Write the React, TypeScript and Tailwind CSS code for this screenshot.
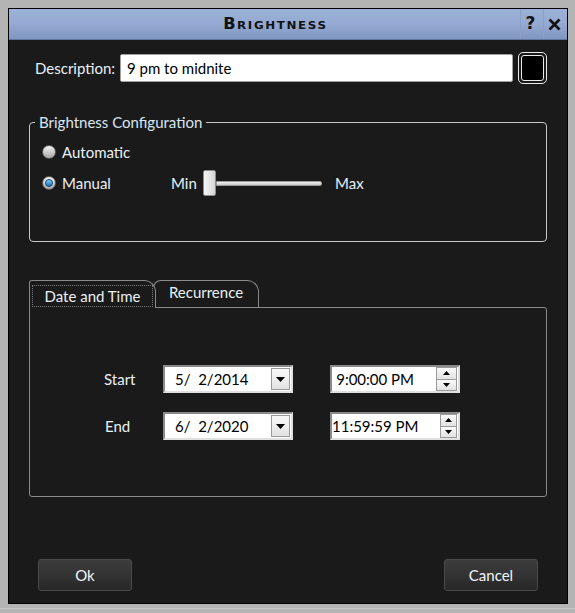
import React from 'react';

const font = { fontFamily: 'Lato, "Noto Sans", sans-serif' };

function Radio({ checked }: { checked?: boolean }) {
  return (
    <span className="relative flex h-[14px] w-[14px] items-center justify-center rounded-full border border-[#5a5a5a] bg-gradient-to-b from-[#f4f4f4] to-[#a8a8a8]">
      {checked && (
        <span className="h-[8px] w-[8px] rounded-full border border-[#0b4a78] bg-gradient-to-b from-[#7fd3ff] to-[#1470b8]" />
      )}
    </span>
  );
}

function DateBox({ value }: { value: string }) {
  return (
    <div className="flex h-[28px] w-[130px] items-center border-2 border-t-[#8a8a8a] border-l-[#8a8a8a] border-b-[#e0e0e0] border-r-[#e0e0e0] bg-white">
      <span className="flex-1 pl-[10px] text-[15px] text-black whitespace-pre">{value}</span>
      <div className="mr-[1px] flex h-[22px] w-[19px] items-center justify-center border border-[#9a9a9a] bg-gradient-to-b from-[#fafafa] to-[#e2e2e2]">
        <svg width="9" height="5" viewBox="0 0 9 5">
          <path d="M0 0 L9 0 L4.5 5 Z" fill="#000" />
        </svg>
      </div>
    </div>
  );
}

function TimeBox({ value }: { value: string }) {
  return (
    <div className="flex h-[28px] w-[130px] items-center border-2 border-t-[#8a8a8a] border-l-[#8a8a8a] border-b-[#e0e0e0] border-r-[#e0e0e0] bg-white">
      <span className="flex-1 whitespace-nowrap pr-[22px] text-right text-[15px] text-black">{value}</span>
      <div className="mr-[1px] flex h-[24px] w-[21px] flex-col">
        <div className="flex flex-1 items-center justify-center border border-[#9a9a9a] bg-gradient-to-b from-[#fafafa] to-[#e2e2e2]">
          <svg width="7" height="4" viewBox="0 0 7 4">
            <path d="M0 4 L7 4 L3.5 0 Z" fill="#000" />
          </svg>
        </div>
        <div className="flex flex-1 items-center justify-center border border-t-0 border-[#9a9a9a] bg-gradient-to-b from-[#fafafa] to-[#e2e2e2]">
          <svg width="7" height="4" viewBox="0 0 7 4">
            <path d="M0 0 L7 0 L3.5 4 Z" fill="#000" />
          </svg>
        </div>
      </div>
    </div>
  );
}

function DarkButton({ label }: { label: string }) {
  return (
    <button className="flex h-[32px] w-[94px] items-center justify-center rounded-[3px] border border-[#4a4a4a] bg-gradient-to-b from-[#3c3c3c] via-[#333333] to-[#272727] text-[15px] text-[#f2f6fa]">
      {label}
    </button>
  );
}

export default function App() {
  return (
    <div className="h-[613px] w-[575px] bg-[#b4b4b4] pt-[8px] pl-[8px] pr-[7px]" style={font}>
      <div className="flex h-[596px] flex-col border border-black bg-[#1a1a1a] text-[#e9f0f6]">
        {/* Title bar */}
        <div className="flex h-[31px] items-stretch border-b border-[#5f759c] bg-gradient-to-b from-[#9cb1d7] via-[#95aad2] to-[#7f96c1]">
          <div className="flex flex-1 items-center justify-center pl-[22px]">
            <span
              className="text-[15px] font-bold tracking-[1.5px] text-[#111]"
              style={{ fontFamily: '"DejaVu Sans", sans-serif', fontVariant: 'small-caps', transform: 'scaleX(1.08)' }}
            >
              Brightness
            </span>
          </div>
          <div className="flex w-[23px] items-center justify-center border-l border-[#8ba0c8] pr-[3px] text-[17px] font-bold text-[#111]" style={{ fontFamily: '"DejaVu Sans", sans-serif' }}>
            ?
          </div>
          <div className="flex w-[24px] items-center justify-center border-l border-[#8ba0c8] pr-[2px]">
            <svg width="13" height="13" viewBox="0 0 13 13">
              <path d="M1.5 1.5 L11.5 11.5 M11.5 1.5 L1.5 11.5" stroke="#111" strokeWidth="2.6" />
            </svg>
          </div>
        </div>

        {/* Description */}
        <div className="mt-[12px] flex items-center">
          <span className="ml-[26px] w-[85px] whitespace-nowrap text-[15px]">Description:</span>
          <div className="flex h-[28px] w-[393px] items-center rounded-[2px] border border-[#a0a0a0] bg-white pl-[6px] text-[15px] text-black">
            9 pm to midnite
          </div>
          <div className="ml-[5px] flex h-[32px] w-[29px] items-center justify-center rounded-[5px] border border-[#e8e8e8] p-[2px]">
            <div className="h-full w-full rounded-[3px] border border-[#e8e8e8] bg-black" />
          </div>
        </div>

        {/* Brightness configuration */}
        <fieldset className="mx-[20px] mt-[27px] h-[131px] rounded-[4px] border border-[#c8c8c8] px-[12px]">
          <legend className="-ml-[7px] px-[4px] text-[15px] text-[#d8e6f2]">Brightness Configuration</legend>
          <div className="flex items-center gap-[6px] pt-[7px]">
            <Radio />
            <span className="text-[15px]">Automatic</span>
          </div>
          <div className="mt-[7px] flex items-center">
            <Radio checked />
            <span className="ml-[6px] w-[109px] text-[15px]">Manual</span>
            <span className="w-[32px] text-[15px]">Min</span>
            <div className="relative flex h-[26px] w-[119px] items-center">
              <div className="h-[26px] w-[13px] rounded-[2px] border border-[#8a8a8a] bg-gradient-to-r from-[#f6f6f6] to-[#d4d4d4]" />
              <div className="h-[5px] flex-1 rounded-r-[2px] border border-[#9a9a9a] bg-gradient-to-b from-[#f0f0f0] to-[#c8c8c8]" />
            </div>
            <span className="ml-[13px] text-[15px]">Max</span>
          </div>
        </fieldset>

        {/* Tabs */}
        <div className="mx-[20px] mt-[38px] flex items-end">
          <div className="relative z-10 -mb-[1px] flex h-[28px] w-[127px] items-center justify-center rounded-tl-[3px] rounded-tr-[12px] border border-b-0 border-[#8a8a8a] bg-[#1a1a1a] px-[3px] pt-[3px]">
            <span className="whitespace-nowrap border border-dotted border-[#7a7a7a] px-[12px] text-[15px] leading-[20px]">Date and Time</span>
          </div>
          <div className="-ml-[3px] flex h-[27px] w-[106px] items-center justify-center rounded-tl-[8px] rounded-tr-[12px] border border-b-0 border-[#8a8a8a] pb-[3px] text-[15px]">
            Recurrence
          </div>
        </div>
        <div className="mx-[20px] flex h-[190px] flex-col rounded-b-[3px] rounded-tr-[3px] border border-[#8a8a8a] pt-[57px]">
          <div className="flex items-center">
            <span className="ml-[74px] w-[59px] text-[15px]">Start</span>
            <DateBox value="5/  2/2014" />
            <div className="ml-[37px]">
              <TimeBox value="9:00:00 PM" />
            </div>
          </div>
          <div className="mt-[19px] flex items-center">
            <span className="ml-[75px] w-[58px] text-[15px]">End</span>
            <DateBox value="6/  2/2020" />
            <div className="ml-[37px]">
              <TimeBox value="11:59:59 PM" />
            </div>
          </div>
        </div>

        {/* Footer buttons */}
        <div className="mx-[29px] mt-[62px] flex justify-between">
          <DarkButton label="Ok" />
          <DarkButton label="Cancel" />
        </div>
      </div>
      <div className="mt-[4px] -ml-[8px] h-px w-[575px] bg-[#c8c8c8]" />
    </div>
  );
}
